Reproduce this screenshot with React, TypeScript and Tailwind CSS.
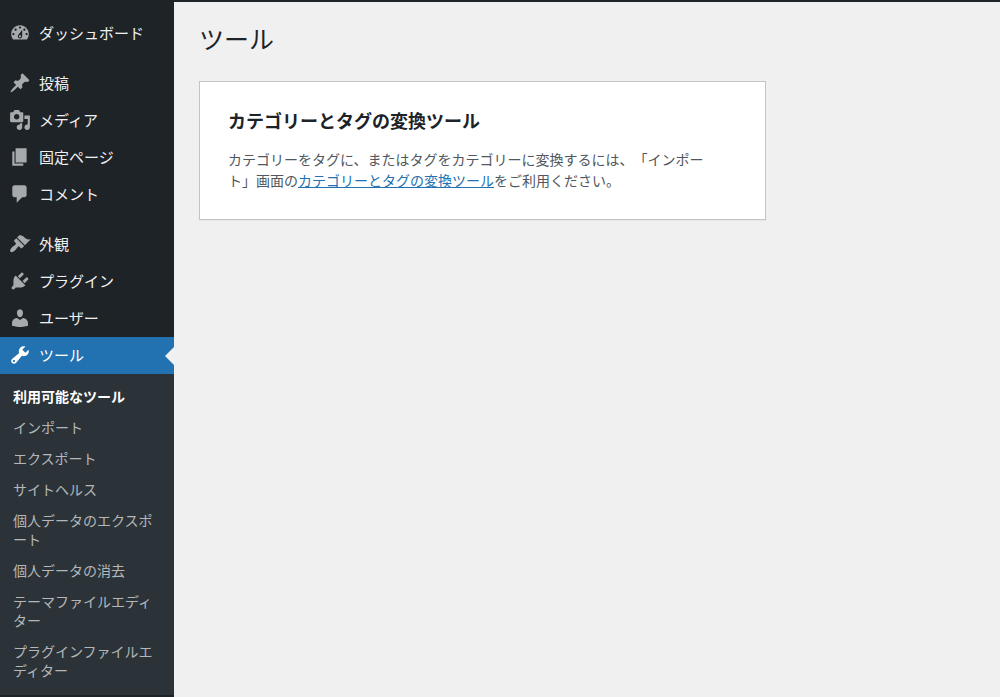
type MenuItem = {
  label: string;
  icon: string;
  current?: boolean;
};

// 20x20 のアイコンパス
const ICONS: Record<string, string> = {
  dashboard:
    "M3.76 16h12.48c1.1-1.37 1.76-3.11 1.76-5 0-4.42-3.58-8-8-8s-8 3.58-8 8c0 1.89.66 3.63 1.76 5zM10 4c.55 0 1 .45 1 1s-.45 1-1 1-1-.45-1-1 .45-1 1-1zM6 6c.55 0 1 .45 1 1s-.45 1-1 1-1-.45-1-1 .45-1 1-1zm8 0c.55 0 1 .45 1 1s-.45 1-1 1-1-.45-1-1 .45-1 1-1zm-5.37 5.55L12 7v6c0 1.1-.9 2-2 2s-2-.9-2-2c0-.57.24-1.08.63-1.45zM4 10c.55 0 1 .45 1 1s-.45 1-1 1-1-.45-1-1 .45-1 1-1zm12 0c.55 0 1 .45 1 1s-.45 1-1 1-1-.45-1-1 .45-1 1-1zm-5 3c0-.55-.45-1-1-1s-1 .45-1 1 .45 1 1 1 1-.45 1-1z",
  post: "M10.44 3.02l1.82-1.82 6.36 6.35-1.83 1.82c-1.05-.68-2.48-.57-3.41.36l-.75.75c-.92.93-1.04 2.35-.35 3.41l-1.83 1.82-2.41-2.41-2.8 2.79c-.42.42-3.38 2.71-3.8 2.29s1.86-3.39 2.28-3.81l2.79-2.79L4.1 9.36l1.83-1.82c1.05.69 2.48.57 3.4-.36l.75-.75c.93-.92 1.05-2.35.36-3.41z",
  media:
    "M13 11V4c0-.55-.45-1-1-1h-1.67L9 1H5L3.67 3H2c-.55 0-1 .45-1 1v7c0 .55.45 1 1 1h10c.55 0 1-.45 1-1zM7 4.5c1.38 0 2.5 1.12 2.5 2.5S8.38 9.5 7 9.5 4.5 8.38 4.5 7 5.62 4.5 7 4.5zM14 6h5v10.5c0 1.38-1.12 2.5-2.5 2.5S14 17.88 14 16.5s1.12-2.5 2.5-2.5c.17 0 .34.02.5.05V9h-3V6zm-4 8.05V13h2v3.5c0 1.38-1.12 2.5-2.5 2.5S7 17.88 7 16.5 8.12 14 9.5 14c.17 0 .34.02.5.05z",
  page: "M6 15V2h10v13H6zm-1 1h8v2H3V5h2v11z",
  comments:
    "M5 2h9c1.1 0 2 .9 2 2v7c0 1.1-.9 2-2 2h-2l-5 5v-5H5c-1.1 0-2-.9-2-2V4c0-1.1.9-2 2-2z",
  appearance:
    "M14.48 11.06L7.41 3.99l1.5-1.5c.5-.56 2.3-.47 3.51.32 1.21.8 1.43 1.28 2.91 2.1 1.18.64 2.45 1.26 4.45.85zm-.71.71L6.7 4.7 4.93 6.47c-.39.39-.39 1.02 0 1.41l1.06 1.06c.39.39.39 1.03 0 1.42-.6.6-1.43 1.11-2.21 1.69-.35.26-.7.53-1.01.84C1.43 14.23.4 16.08 1.4 17.07c.99 1 2.84-.03 4.18-1.36.31-.31.58-.66.85-1.02.57-.78 1.08-1.61 1.69-2.21.39-.39 1.02-.39 1.41 0l1.06 1.06c.39.39 1.02.39 1.41 0z",
  plugins:
    "M13.11 4.36L9.87 7.6 8 5.73l3.24-3.24c.35-.34 1.05-.2 1.56.32.52.51.66 1.21.31 1.55zm-8 1.77l.91-1.12 9.01 9.01-1.19.84c-.71.71-2.63 1.16-3.82 1.16H6.14L4.9 17.26c-.59.59-1.54.59-2.12 0-.59-.58-.59-1.53 0-2.12l1.24-1.24v-3.88c0-1.13.4-3.19 1.09-3.89zm7.26 3.97l3.24-3.24c.34-.35 1.04-.21 1.55.31.52.51.66 1.21.31 1.55l-3.24 3.25z",
  users:
    "M10 9.25c-2.27 0-2.73-3.44-2.73-3.44C7 4.02 7.82 2 9.97 2c2.16 0 2.98 2.02 2.71 3.81 0 0-.41 3.44-2.68 3.44zm0 2.57L12.72 10c2.39 0 4.52 2.33 4.52 4.53v2.49s-3.65 1.13-7.24 1.13c-3.65 0-7.24-1.13-7.24-1.13v-2.49c0-2.25 1.94-4.48 4.47-4.48z",
  tools:
    "M16.68 9.77c-1.34 1.34-3.3 1.67-4.95.99l-5.41 6.52c-.99.99-2.59.99-3.58 0s-.99-2.59 0-3.57l6.52-5.42c-.68-1.65-.35-3.61.99-4.95 1.28-1.28 3.12-1.62 4.72-1.06l-2.89 2.89 2.82 2.82 2.86-2.87c.53 1.58.18 3.39-1.08 4.65zM3.81 16.21c.4.39 1.04.39 1.43 0 .4-.4.4-1.04 0-1.43-.39-.4-1.03-.4-1.43 0-.39.39-.39 1.03 0 1.43z",
};

const MENU_GROUPS: MenuItem[][] = [
  [{ label: "ダッシュボード", icon: "dashboard" }],
  [
    { label: "投稿", icon: "post" },
    { label: "メディア", icon: "media" },
    { label: "固定ページ", icon: "page" },
    { label: "コメント", icon: "comments" },
  ],
  [
    { label: "外観", icon: "appearance" },
    { label: "プラグイン", icon: "plugins" },
    { label: "ユーザー", icon: "users" },
    { label: "ツール", icon: "tools", current: true },
  ],
];

const SUBMENU = [
  "利用可能なツール",
  "インポート",
  "エクスポート",
  "サイトヘルス",
  "個人データのエクスポート",
  "個人データの消去",
  "テーマファイルエディター",
  "プラグインファイルエディター",
];

function MenuLink({ item }: { item: MenuItem }) {
  return (
    <a
      href="#"
      aria-current={item.current ? "true" : undefined}
      className={`relative flex h-[37px] items-center gap-2 pb-px pl-[9px] text-[15px] ${
        item.current ? "bg-[#2271b1] text-white" : "text-[#f0f0f1]"
      }`}
    >
      <svg
        viewBox="0 0 20 20"
        aria-hidden="true"
        className={`size-[22px] shrink-0 ${
          item.current ? "fill-white" : "fill-[#a7aaad]"
        }`}
      >
        <path d={ICONS[item.icon]} />
      </svg>
      <span>{item.label}</span>
      {/* 現在のメニューを示す矢印 */}
      {item.current && (
        <span className="absolute top-1/2 right-0 -translate-y-1/2 border-y-9 border-r-9 border-y-transparent border-r-[#f0f0f1]" />
      )}
    </a>
  );
}

function Submenu() {
  return (
    <ul className="bg-[#2c3338] pt-[7px] pb-[9px]">
      {SUBMENU.map((label, i) => (
        <li key={label}>
          <a
            href="#"
            className={`block px-[13px] py-[6px] text-sm leading-[19px] break-all [line-break:anywhere] ${
              i === 0 ? "font-bold text-white" : "text-[#b4b7ba]"
            }`}
          >
            {label}
          </a>
        </li>
      ))}
    </ul>
  );
}

export default function App() {
  return (
    <div
      lang="ja"
      className="flex min-h-screen flex-col border-t-2 border-[#1d2327] bg-[#f0f0f1] font-['Noto_Sans_CJK_JP',sans-serif] [text-spacing-trim:space-all]"
    >
      <div className="flex flex-1">
        <nav
          aria-label="メインメニュー"
          className="w-[174px] shrink-0 bg-[#1d2327] pt-[13px]"
        >
          <div className="flex flex-col gap-[13px]">
            {MENU_GROUPS.map((group, i) => (
              <ul key={i}>
                {group.map((item) => (
                  <li key={item.label}>
                    <MenuLink item={item} />
                    {item.current && <Submenu />}
                  </li>
                ))}
              </ul>
            ))}
          </div>
        </nav>

        <main className="flex-1 pt-[18px] pr-5 pl-[25px]">
          <h1 className="text-[25px] leading-9 text-[#1d2327]">ツール</h1>
          <section className="mt-[25px] max-w-[567px] border border-[#c3c4c7] bg-white pt-6 pr-9 pb-7 pl-7 shadow-[0_1px_1px_rgba(0,0,0,0.04)]">
            <h2 className="text-lg leading-7 font-bold text-[#1d2327]">
              カテゴリーとタグの変換ツール
            </h2>
            <p className="mt-[15px] text-sm leading-[21px] text-[#50575e]">
              カテゴリーをタグに、またはタグをカテゴリーに変換するには、「インポート」画面の
              <a href="#" className="text-[#2271b1] underline">
                カテゴリーとタグの変換ツール
              </a>
              をご利用ください。
            </p>
          </section>
        </main>
      </div>
    </div>
  );
}
